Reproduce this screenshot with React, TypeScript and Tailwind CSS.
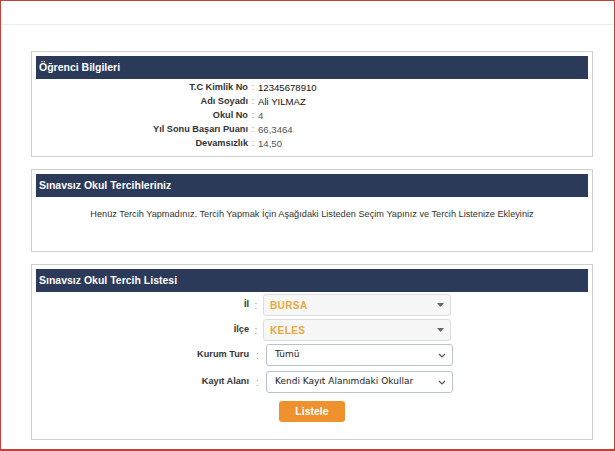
import React from 'react';

const ogrenci = [
  { label: 'T.C Kimlik No', value: '12345678910', dark: true },
  { label: 'Adı Soyadı', value: 'Ali YILMAZ', dark: true },
  { label: 'Okul No', value: '4' },
  { label: 'Yıl Sonu Başarı Puanı', value: '66,3464' },
  { label: 'Devamsızlık', value: '14,50' },
];

const Panel = ({ title, children, className }: { title: string; children: React.ReactNode; className?: string }) => (
  <div className={`border border-[#cfcfcf] p-[4px] ${className ?? ''}`}>
    <div className="h-[23px] bg-[#2c3a5a] px-[3px] flex items-center text-[10.5px] font-bold text-white">{title}</div>
    {children}
  </div>
);

const GraySelect = ({ value }: { value: string }) => (
  <div className="w-[188px] h-[22px] border border-[#dcdcdc] rounded-[3px] bg-[#f7f7f7] flex items-center justify-between pl-[6px] pr-[6px]">
    <span className="text-[10px] font-bold text-[#e8a83c] tracking-[0.4px]">{value}</span>
    <svg width="7" height="4" viewBox="0 0 7 4"><path d="M0 0h7L3.5 4z" fill="#666" /></svg>
  </div>
);

const WhiteSelect = ({ value }: { value: string }) => (
  <div className="w-[187px] h-[22px] border border-[#b9c3d0] rounded-[3px] bg-white flex items-center justify-between pl-[8px] pr-[6px]">
    <span className="text-[9px] text-[#222] whitespace-nowrap" style={{ fontFamily: '"DejaVu Sans", Verdana, sans-serif' }}>{value}</span>
    <svg width="8" height="5" viewBox="0 0 8 5"><path d="M1 1l3 3 3-3" fill="none" stroke="#555" strokeWidth="1.2" /></svg>
  </div>
);

export default function App() {
  return (
    <div className="w-[615px] h-[451px] bg-white border border-[#c9403a] border-b-2 overflow-hidden" style={{ fontFamily: '"Liberation Sans", Arial, sans-serif' }}>
      <div className="h-[24px] border-b border-[#ececec]" />
      <div className="pl-[30px] pr-[21px] pt-[26px] flex flex-col gap-[12px]">
        <Panel title="Öğrenci Bilgileri" className="h-[106px]">
          <div className="pt-[2px] flex flex-col">
            {ogrenci.map((r) => (
              <div key={r.label} className="flex h-[14px] items-center text-[9.2px]">
                <div className="w-[212px] text-right font-bold text-[#333]">{r.label}</div>
                <div className="w-[10px] text-center text-[#999]">:</div>
                <div className={r.dark ? 'text-[#111] text-[9.6px]' : 'text-[#555] text-[9.6px]'}>{r.value}</div>
              </div>
            ))}
          </div>
        </Panel>
        <Panel title="Sınavsız Okul Tercihleriniz" className="h-[83px]">
          <div className="pt-[11px] text-center text-[9.2px] text-[#333]">
            Henüz Tercih Yapmadınız. Tercih Yapmak İçin Aşağıdaki Listeden Seçim Yapınız ve Tercih Listenize Ekleyiniz
          </div>
        </Panel>
        <Panel title="Sınavsız Okul Tercih Listesi" className="h-[176px]">
          <div className="pt-[2px] flex flex-col gap-[3px]">
            <div className="flex items-center">
              <div className="w-[213px] text-right text-[9.2px] font-bold text-[#333]">İl</div>
              <div className="w-[14px] text-center text-[10px] text-[#999]">:</div>
              <GraySelect value="BURSA" />
            </div>
            <div className="flex items-center">
              <div className="w-[213px] text-right text-[9.2px] font-bold text-[#333]">İlçe</div>
              <div className="w-[14px] text-center text-[10px] text-[#999]">:</div>
              <GraySelect value="KELES" />
            </div>
            <div className="flex items-center">
              <div className="w-[213px] text-right text-[9.2px] font-bold text-[#333]">Kurum Turu</div>
              <div className="w-[17px] text-center text-[10px] text-[#999]">:</div>
              <WhiteSelect value="Tümü" />
            </div>
            <div className="flex items-center mt-[2px]">
              <div className="w-[213px] text-right text-[9.2px] font-bold text-[#333]">Kayıt Alanı</div>
              <div className="w-[17px] text-center text-[10px] text-[#999]">:</div>
              <WhiteSelect value="Kendi Kayıt Alanımdaki Okullar" />
            </div>
            <div className="pl-[243px] pt-[2px]">
              <button className="w-[66px] h-[21px] rounded-[3px] bg-[#ef912c] text-white text-[10.5px] font-bold">Listele</button>
            </div>
          </div>
        </Panel>
      </div>
    </div>
  );
}
